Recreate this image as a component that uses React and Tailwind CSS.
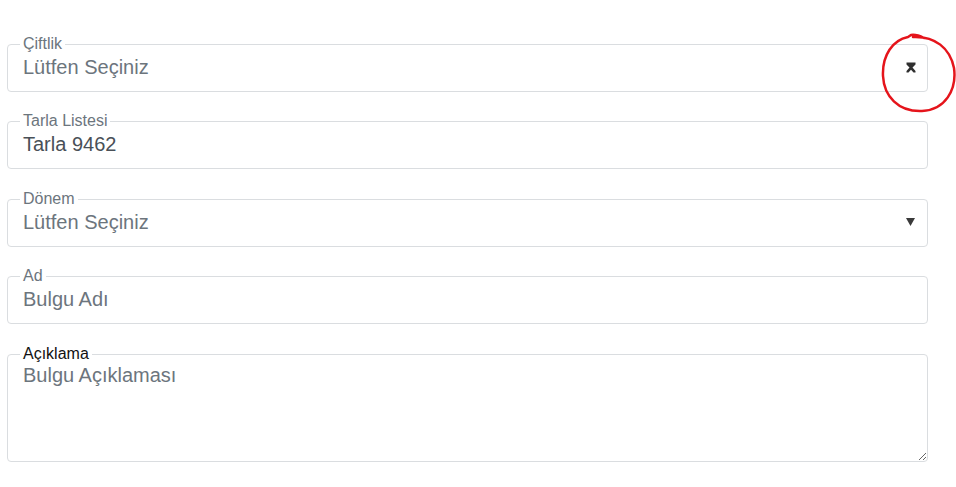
import React from "react";

function Field({ label, children, labelClass = "text-[#6c757d]", gap = "" }) {
  return (
    <fieldset className={`w-[921px] border border-[#dadde0] rounded-[4px] pl-[12px] ${gap}`}>
      <legend className={`px-[3px] text-[16px] leading-[18px] ${labelClass}`}>{label}</legend>
      {children}
    </fieldset>
  );
}

function SortIcon() {
  return (
    <svg width="10" height="11" viewBox="0 0 10 11" className="block">
      <path
        d="M0.5 0.5 H9.5 V2.5 L6.5 5.5 L9.5 9 V10.5 H7.5 L5 7.8 L2.5 10.5 H0.5 V9 L3.5 5.5 L0.5 2.5 Z"
        fill="#2f2f2f"
      />
    </svg>
  );
}

function Caret() {
  return (
    <svg width="9" height="8" viewBox="0 0 9 8" className="block">
      <polygon points="0,0 9,0 4.5,8" fill="#3a3a3a" />
    </svg>
  );
}

export default function App() {
  return (
    <div className="relative w-[956px] h-[487px] bg-white font-['Liberation_Sans',Arial,sans-serif]">
      <div className="pt-[35px] pl-[7px]">
        <Field label="Çiftlik" gap="mb-[20px]">
          <div className="flex h-[38px] items-start justify-between pt-[2px] pr-[11px]">
            <span className="text-[20px] leading-[24px] text-[#6c757d] pl-[3px]">Lütfen Seçiniz</span>
            <span className="pt-[7px]">
              <SortIcon />
            </span>
          </div>
        </Field>

        <Field label="Tarla Listesi" gap="mb-[21px]">
          <div className="flex h-[38px] items-start pt-[2px]">
            <span className="text-[20px] leading-[24px] text-[#495057] pl-[3px]">Tarla 9462</span>
          </div>
        </Field>

        <Field label="Dönem" gap="mb-[20px]">
          <div className="flex h-[38px] items-start justify-between pt-[2px] pr-[12px]">
            <span className="text-[20px] leading-[24px] text-[#6c757d] pl-[3px]">Lütfen Seçiniz</span>
            <span className="pt-[8px]">
              <Caret />
            </span>
          </div>
        </Field>

        <Field label="Ad" gap="mb-[21px]">
          <div className="flex h-[38px] items-start pt-[2px]">
            <span className="text-[20px] leading-[24px] text-[#6c757d] pl-[3px]">Bulgu Adı</span>
          </div>
        </Field>

        <Field label="Açıklama" labelClass="text-[#111]">
          <textarea
            readOnly
            placeholder="Bulgu Açıklaması"
            className="block w-full h-[98px] pl-[3px] pt-0 text-[20px] leading-[24px] text-[#495057] placeholder:text-[#6c757d] outline-none border-0 resize"
          />
        </Field>
      </div>

      <svg
        className="absolute left-0 top-0 pointer-events-none"
        width="956"
        height="487"
        viewBox="0 0 956 487"
      >
        <path
          d="M913 37 C935 36 950 48 954 68 C957 90 945 110 922 111 C898 112 884 96 883 76 C882 55 893 40 908 37 L911 35 C916 34 920 36 924 38"
          fill="none"
          stroke="#e5141b"
          strokeWidth="2.5"
          strokeLinecap="round"
          strokeLinejoin="round"
        />
      </svg>
    </div>
  );
}
